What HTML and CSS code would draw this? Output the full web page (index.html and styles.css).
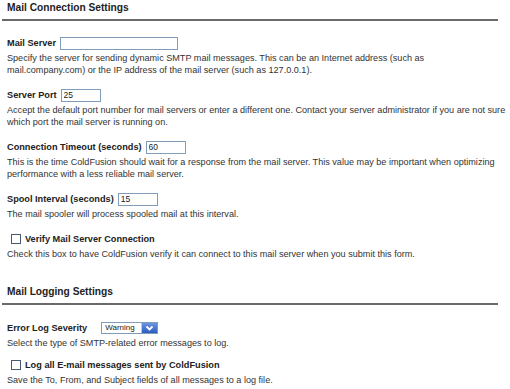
FILE: index.html
```html
<!DOCTYPE html>
<html>
<head>
<meta charset="utf-8">
<link rel="stylesheet" href="styles.css">
</head>
<body>
<div class="page">
  <h2 class="section-title first">Mail Connection Settings</h2>

  <div class="field">
    <div class="row"><span class="label">Mail Server</span><input class="text w-wide" type="text" value=""></div>
    <p class="desc">Specify the server for sending dynamic SMTP mail messages. This can be an Internet address (such as<br>mail.company.com) or the IP address of the mail server (such as 127.0.0.1).</p>
  </div>

  <div class="field">
    <div class="row"><span class="label">Server Port</span><input class="text w-short" type="text" value="25"></div>
    <p class="desc">Accept the default port number for mail servers or enter a different one. Contact your server administrator if you are not sure<br>which port the mail server is running on.</p>
  </div>

  <div class="field">
    <div class="row"><span class="label">Connection Timeout (seconds)</span><input class="text w-short" type="text" value="60"></div>
    <p class="desc">This is the time ColdFusion should wait for a response from the mail server. This value may be important when optimizing<br>performance with a less reliable mail server.</p>
  </div>

  <div class="field">
    <div class="row"><span class="label">Spool Interval (seconds)</span><input class="text w-short" type="text" value="15"></div>
    <p class="desc">The mail spooler will process spooled mail at this interval.</p>
  </div>

  <div class="field">
    <div class="row check-row"><span class="box"></span><span class="label">Verify Mail Server Connection</span></div>
    <p class="desc">Check this box to have ColdFusion verify it can connect to this mail server when you submit this form.</p>
  </div>

  <h2 class="section-title second">Mail Logging Settings</h2>

  <div class="field tight">
    <div class="row"><span class="label sev">Error Log Severity</span><span class="select"><span class="sel-val">Warning</span><span class="sel-btn"><svg width="9" height="7" viewBox="0 0 9 7"><path d="M1.5 1.5 L4.5 4.5 L7.5 1.5" fill="none" stroke="#fff" stroke-width="1.8"/></svg></span></span></div>
    <p class="desc">Select the type of SMTP-related error messages to log.</p>
  </div>

  <div class="field">
    <div class="row check-row"><span class="box"></span><span class="label">Log all E-mail messages sent by ColdFusion</span></div>
    <p class="desc">Save the To, From, and Subject fields of all messages to a log file.</p>
  </div>
</div>
</body>
</html>
```

FILE: styles.css
```css
html, body {
  margin: 0;
  padding: 0;
  background: #ffffff;
}

.page {
  width: 496px;
  padding: 0 0 0 2px;
  font-family: "Liberation Sans", Arial, sans-serif;
  color: #2b2b2b;
}

.section-title {
  margin: 0;
  padding: 3px 0 5px 5px;
  font-size: 10.2px;
  line-height: 12px;
  font-weight: bold;
  color: #222;
  border-bottom: 2px solid #6a6a6a;
}

.section-title.first {
  margin-top: -1px;
  margin-bottom: 15px;
}

.section-title.second {
  margin-top: 23px;
  margin-bottom: 16px;
}

.field {
  padding-left: 5px;
  margin-bottom: 12px;
}

.field.tight {
  margin-bottom: 9px;
}

.row {
  display: flex;
  align-items: center;
  height: 14px;
}

.label {
  font-size: 9.2px;
  font-weight: bold;
  color: #222;
  margin-right: 4px;
}

.label.sev {
  margin-right: 14px;
}

.text {
  box-sizing: border-box;
  height: 13px;
  border: 1px solid #7f9db9;
  padding: 0 0 0 2px;
  margin: 0;
  font-family: "Liberation Sans", Arial, sans-serif;
  font-size: 8.5px;
  color: #222;
  background: #fff;
  outline: none;
}

.w-wide { width: 118px; }
.w-short { width: 40px; }

.desc {
  margin: 2px 0 0 0;
  font-size: 9.1px;
  line-height: 12px;
  color: #333;
  white-space: nowrap;
}

.check-row {
  padding-left: 4px;
}

.box {
  box-sizing: border-box;
  width: 10px;
  height: 10px;
  border: 1px solid #4a5a6e;
  background: #fff;
  margin-right: 4px;
}

.select {
  display: flex;
  box-sizing: border-box;
  width: 57px;
  height: 12px;
  border: 1px solid #7f9db9;
  background: #fff;
}

.sel-val {
  flex: 1;
  font-size: 8px;
  line-height: 10px;
  padding-left: 3px;
  color: #222;
}

.sel-btn {
  width: 15px;
  height: 10px;
  background: linear-gradient(#6b95e0, #2d5cc0);
  border-left: 1px solid #b8c8e8;
  display: flex;
  align-items: center;
  justify-content: center;
}
```
